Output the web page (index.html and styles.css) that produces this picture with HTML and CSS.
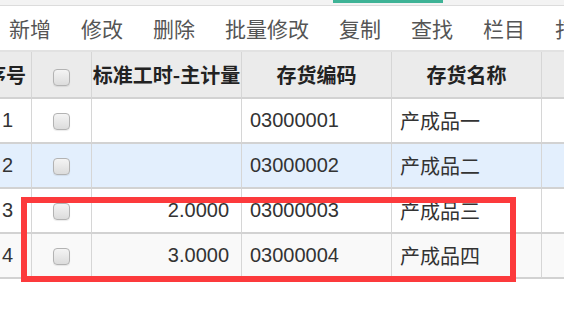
FILE: index.html
```html
<!DOCTYPE html>
<html lang="zh-CN">

<head>
  <meta charset="UTF-8">
  <meta name="viewport" content="width=device-width, initial-scale=1.0">
  <title>存货档案</title>
  <link rel="stylesheet" href="styles.css">
</head>

<body>

  <div class="tab-strip">
    <div class="tab-active"></div>
  </div>

  <div class="toolbar">
    <span class="tool">新增</span>
    <span class="tool">修改</span>
    <span class="tool">删除</span>
    <span class="tool">批量修改</span>
    <span class="tool">复制</span>
    <span class="tool">查找</span>
    <span class="tool">栏目</span>
    <span class="tool">打印</span>
  </div>

  <div class="grid-wrap">
    <table class="grid">
      <colgroup>
        <col class="c-no">
        <col class="c-chk">
        <col class="c-mid">
        <col class="c-mid">
        <col class="c-mid">
        <col class="c-rest">
      </colgroup>
      <thead>
        <tr>
          <th class="th-no">序号</th>
          <th><span class="chk"></span></th>
          <th>标准工时-主计量</th>
          <th>存货编码</th>
          <th>存货名称</th>
          <th></th>
        </tr>
      </thead>
      <tbody>
        <tr>
          <td class="no">1</td>
          <td class="center"><span class="chk"></span></td>
          <td class="num"></td>
          <td>03000001</td>
          <td>产成品一</td>
          <td></td>
        </tr>
        <tr class="selected">
          <td class="no">2</td>
          <td class="center"><span class="chk"></span></td>
          <td class="num"></td>
          <td>03000002</td>
          <td>产成品二</td>
          <td></td>
        </tr>
        <tr>
          <td class="no">3</td>
          <td class="center"><span class="chk"></span></td>
          <td class="num">2.0000</td>
          <td>03000003</td>
          <td>产成品三</td>
          <td></td>
        </tr>
        <tr class="odd">
          <td class="no">4</td>
          <td class="center"><span class="chk"></span></td>
          <td class="num">3.0000</td>
          <td>03000004</td>
          <td>产成品四</td>
          <td></td>
        </tr>
      </tbody>
    </table>
  </div>

  <!-- annotation box drawn over rows 3 and 4 -->
  <div class="mark"></div>

</body>

</html>
```

FILE: styles.css
```css
body {
  margin: 0;
  background: #fff;
  font-family: "Liberation Sans", "Noto Sans CJK SC", sans-serif;
  color: #333;
  overflow: hidden;
}

.tab-strip {
  height: 5px;
  background: #f3f3f3;
  border-bottom: 1px solid #dcdcdc;
}

.tab-active {
  margin-left: 333px;
  width: 110px;
  height: 3px;
  background: #3eb396;
}

.toolbar {
  height: 44px;
  display: flex;
  align-items: center;
  gap: 30px;
  padding-left: 9px;
  border-bottom: 2px solid #e2e2e2;
  white-space: nowrap;
  overflow: hidden;
}

.tool {
  font-family: "Noto Sans CJK SC", sans-serif;
  font-size: 21px;
  color: #555;
}

.grid-wrap {
  overflow: hidden;
}

.grid {
  margin-left: -24px;
  width: 666px;
  table-layout: fixed;
  border-collapse: separate;
  border-spacing: 0;
  font-size: 20px;
}

.c-no { width: 56px; }
.c-chk { width: 60px; }
.c-mid { width: 150px; }
.c-rest { width: 100px; }

.grid th,
.grid td {
  border-right: 1px solid #d6d6d6;
  border-bottom: 2px solid #d2d2d2;
  padding: 0 8px;
  white-space: nowrap;
  overflow: hidden;
}

.grid th {
  height: 45px;
  padding: 0;
  background: #ebebeb;
  font-family: "Noto Sans CJK SC", sans-serif;
  font-weight: bold;
  color: #222;
  text-align: center;
}

.grid th.th-no {
  text-align: right;
  padding-right: 5px;
}

.grid td {
  height: 43px;
  color: #333;
}

.grid td.no {
  padding-left: 26px;
}

.grid .center {
  text-align: center;
}

.grid td.num {
  text-align: right;
  padding-right: 12px;
}

.grid tr.selected td {
  background: #e3effd;
}

.grid tr.odd td {
  background: #f9f9f9;
}

.chk {
  display: inline-block;
  width: 15px;
  height: 15px;
  vertical-align: middle;
  border: 1px solid #b3b3b3;
  border-radius: 4px;
  background: linear-gradient(#f4f4f4, #dcdcdc);
  box-shadow: 0 1px 1px rgba(0, 0, 0, 0.08);
}

.mark {
  position: absolute;
  left: 21px;
  top: 197px;
  width: 495px;
  height: 85px;
  box-sizing: border-box;
  border: 6px solid #fc3a3c;
}
```
